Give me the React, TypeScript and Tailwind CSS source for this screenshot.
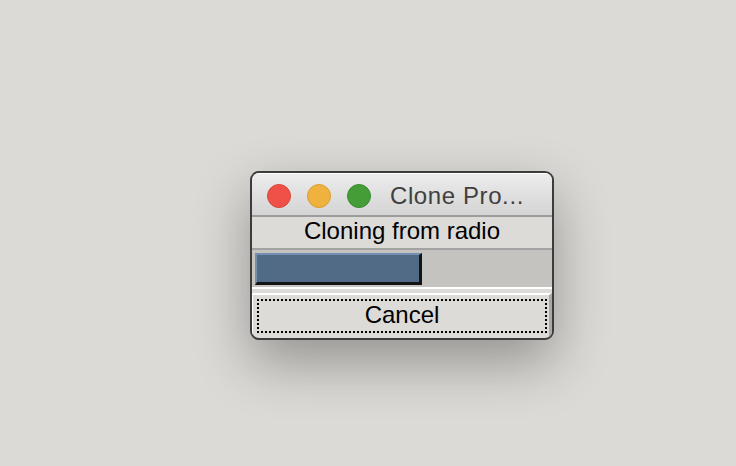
export default function App() {
  return (
    <div
      className="w-[736px] h-[466px] bg-[#dcdad6] overflow-hidden pt-[171px] pl-[250px]"
      style={{ fontFamily: '"Liberation Sans", Arial, sans-serif' }}
    >
      <div className="w-[304px] h-[169px] rounded-[9px] border-2 border-[#3c3c3c] bg-[#dcdbd8] overflow-hidden shadow-[0_22px_55px_rgba(0,0,0,0.33)] flex flex-col">
        {/* title bar */}
        <div className="h-[44px] shrink-0 bg-gradient-to-b from-[#ececec] to-[#d4d4d4] border-t border-t-white border-b-2 border-b-[#9c9c9c] flex items-center pl-[15px]">
          <div className="w-[24px] h-[24px] rounded-full bg-[#ef5147] border border-[#d8453c] mt-[2px]" />
          <div className="w-[24px] h-[24px] rounded-full bg-[#f0b23e] border border-[#d99e33] ml-[16px] mt-[2px]" />
          <div className="w-[24px] h-[24px] rounded-full bg-[#449d37] border border-[#3a8a2f] ml-[16px] mt-[2px]" />
          <div className="ml-[19px] mt-[3px] text-[24px] leading-none text-[#404040] tracking-[0.6px]">Clone Pro...</div>
        </div>
        {/* label */}
        <div className="h-[33px] shrink-0 flex items-center justify-center pb-[3px] text-[24px] leading-none text-black border-b-2 border-b-[#a3a3a3]">
          Cloning from radio
        </div>
        {/* progress trough */}
        <div className="h-[37px] shrink-0 bg-[#c4c3c0] pl-[3px] pt-[3px] pr-[2px]">
          <div className="w-[167px] h-[32px] bg-[#516a85] border-t-2 border-l-2 border-t-[#7390b0] border-l-[#7390b0] border-b-[3px] border-r-[3px] border-b-[#141414] border-r-[#141414]" />
        </div>
        <div className="h-[2px] shrink-0 bg-white" />
        <div className="h-[4px] shrink-0 bg-[#dcdbd8]" />
        {/* button */}
        <div className="flex-1 border-t-2 border-t-white border-l border-l-white border-r-[3px] border-r-[#a9a8a5] pl-[4px] pr-[2px] pt-[4px] pb-[5px]">
          <div className="h-full border-[2.5px] border-dotted border-black flex items-center justify-center pb-[2px] text-[24px] leading-none text-black">
            Cancel
          </div>
        </div>
      </div>
    </div>
  );
}
